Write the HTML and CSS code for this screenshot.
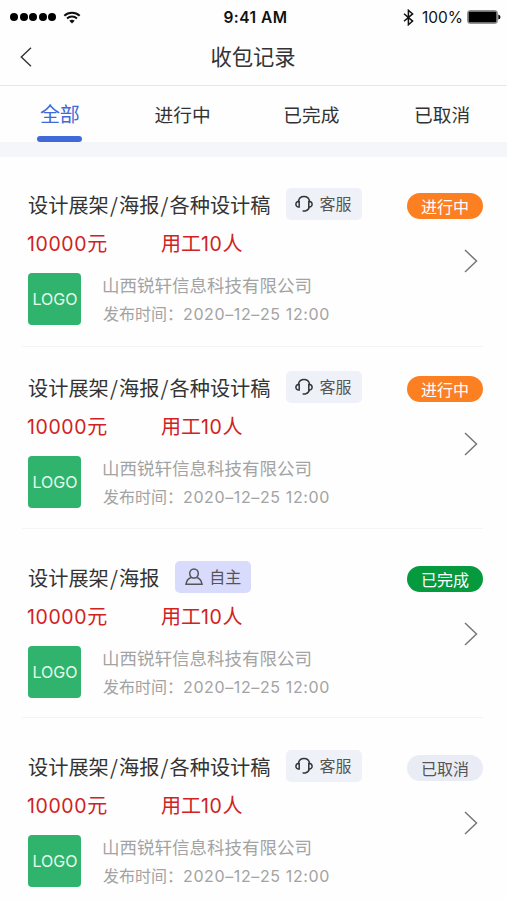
FILE: index.html
```html
<!DOCTYPE html>
<html lang="zh-CN">
<head>
<meta charset="utf-8">
<title>收包记录</title>
<link rel="stylesheet" href="styles.css">
</head>
<body>
<svg class="defs" width="0" height="0" aria-hidden="true">
  <symbol id="headset" viewBox="0 0 18 18"><path d="M3.400 6.200C4 3.400 6.200 1.600 9 1.600s5 1.800 5.600 4.600M4.200 6.400v5.600C2 12.200.9 10.900.9 9.200s1.100-3 3.300-2.800zM13.800 6.400v5.600c2.200.2 3.300-1.100 3.300-2.800s-1.100-3-3.300-2.800zM14.400 12c-.5 1.900-1.700 3.200-3.700 3.700M7.600 16h3.200"/></symbol>
  <symbol id="person" viewBox="0 0 18 18"><path d="M6.400 9.300C5.200 8.500 4.700 7.100 4.700 5.600 4.700 3 6.500 1 9 1s4.300 2 4.300 4.600c0 1.500-.5 2.900-1.700 3.700M6.400 9.300C3.400 10.400 1.600 12.400 1 16.200h16c-.6-3.800-2.400-5.800-5.400-6.900M6.400 9.300c1.600 1 3.600 1 5.200 0"/></symbol>
  <symbol id="next" viewBox="0 0 14 24"><path d="M1 1l11.500 11L1 23"/></symbol>
</svg>
<header>
  <div class="status">
    <div class="signal"><i></i><i></i><i></i><i></i><i></i>
      <svg class="wifi" width="18" height="13" viewBox="0 0 18 13"><path d="M1.300 4.700c4.300-4 11.100-4 15.400 0M4 7.500c2.800-2.600 7.200-2.600 10 0"/><path class="solid" d="M6.300 9.800c1.500-1.400 3.900-1.400 5.400 0L9 12.600z"/></svg>
    </div>
    <div class="clock">9:41 AM</div>
    <div class="power">
      <svg class="bluetooth" width="11" height="17" viewBox="0 0 11 17"><path d="M1 4.800l8.600 7.300-4.200 3.600V1.300l4.200 3.600L1 12.200"/></svg>
      <span class="percent">100%</span>
      <svg class="battery" width="34" height="14" viewBox="0 0 34 14"><rect class="shell" x=".7" y=".7" width="29.600" height="12.600" rx="2"/><rect x="1.500" y="1.500" width="28" height="11" rx="1"/><path d="M31.300 4.500q2.200.5 2.200 2.500t-2.200 2.500z"/></svg>
    </div>
  </div>
  <div class="navbar">
    <svg class="back" width="12" height="20" viewBox="0 0 12 20"><path d="M11 .8L1.300 10 11 19.200"/></svg>
    <h1>收包记录</h1>
  </div>
  <nav class="tabs">
    <a class="tab active">全部</a><a class="tab">进行中</a><a class="tab">已完成</a><a class="tab">已取消</a>
  </nav>
</header>
<main>
  <article class="record first">
    <div class="main">
      <div class="head"><h2>设计展架<b>/</b>海报<b>/</b>各种设计稿</h2><span class="tag"><svg><use href="#headset"/></svg>客服</span></div>
      <div class="terms"><span class="price"><em>10000</em>元</span><span>用工<em>10</em>人</span></div>
      <div class="company"><div class="logo">LOGO</div><div class="details"><p class="name">山西锐轩信息科技有限公司</p><p class="date">发布时间：<time>2020–12–25 12:00</time></p></div></div>
    </div>
    <div class="side"><span class="state doing">进行中</span><svg class="next"><use href="#next"/></svg></div>
  </article>
  <article class="record second">
    <div class="main">
      <div class="head"><h2>设计展架<b>/</b>海报<b>/</b>各种设计稿</h2><span class="tag"><svg><use href="#headset"/></svg>客服</span></div>
      <div class="terms"><span class="price"><em>10000</em>元</span><span>用工<em>10</em>人</span></div>
      <div class="company"><div class="logo">LOGO</div><div class="details"><p class="name">山西锐轩信息科技有限公司</p><p class="date">发布时间：<time>2020–12–25 12:00</time></p></div></div>
    </div>
    <div class="side"><span class="state doing">进行中</span><svg class="next"><use href="#next"/></svg></div>
  </article>
  <article class="record third">
    <div class="main">
      <div class="head"><h2>设计展架<b>/</b>海报</h2><span class="tag self"><svg><use href="#person"/></svg>自主</span></div>
      <div class="terms"><span class="price"><em>10000</em>元</span><span>用工<em>10</em>人</span></div>
      <div class="company"><div class="logo">LOGO</div><div class="details"><p class="name">山西锐轩信息科技有限公司</p><p class="date">发布时间：<time>2020–12–25 12:00</time></p></div></div>
    </div>
    <div class="side"><span class="state done">已完成</span><svg class="next"><use href="#next"/></svg></div>
  </article>
  <article class="record fourth">
    <div class="main">
      <div class="head"><h2>设计展架<b>/</b>海报<b>/</b>各种设计稿</h2><span class="tag"><svg><use href="#headset"/></svg>客服</span></div>
      <div class="terms"><span class="price"><em>10000</em>元</span><span>用工<em>10</em>人</span></div>
      <div class="company"><div class="logo">LOGO</div><div class="details"><p class="name">山西锐轩信息科技有限公司</p><p class="date">发布时间：<time>2020–12–25 12:00</time></p></div></div>
    </div>
    <div class="side"><span class="state cancelled">已取消</span><svg class="next"><use href="#next"/></svg></div>
  </article>
</main>
</body>
</html>
```
FILE: styles.css
```css
* { box-sizing: border-box; margin: 0; padding: 0; }
body { width: 507px; height: 900px; overflow: hidden; background: #fefefe; color: #333; font-family: "Noto Sans CJK SC", sans-serif; white-space: nowrap; }
svg { fill: none; stroke: currentColor; flex: none; display: block; }
.defs { position: absolute; }
em, b { font-style: normal; font-weight: 400; }

.status { height: 34px; display: grid; grid-template-columns: 1fr auto 1fr; align-items: center; padding: 0 6px 0 10px; font-family: Inter, sans-serif; color: #111; }
.signal { display: flex; align-items: center; gap: 1.500px; }
.signal i { width: 8px; height: 8px; border-radius: 50%; background: #000; }
.wifi { margin-left: 5px; stroke-width: 2; }
.wifi .solid { fill: currentColor; stroke: none; }
.clock { font-size: 15.500px; font-weight: 600; line-height: 20px; letter-spacing: .5px; padding-top: 1px; }
.power { display: flex; align-items: center; justify-content: flex-end; }
.bluetooth { stroke-width: 1.500; margin-right: 8px; }
.percent { font-size: 15.500px; line-height: 20px; margin-right: 4px; padding-top: 1px; }
.battery { fill: #000; stroke: none; }
.battery .shell { fill: none; stroke: #777; }

.navbar { height: 52px; display: grid; grid-template-columns: 1fr auto 1fr; align-items: center; padding: 0 21px 6px 20px; border-bottom: 1px solid #e8e8e8; }
.back { stroke-width: 1.400; }
h1 { font-size: 21.300px; font-weight: 400; line-height: 32px; padding-bottom: 1px; }

.tabs { height: 71px; display: flex; border-bottom: 15px solid #f4f6f9; }
.tab { position: relative; width: 130px; height: 56px; text-align: center; font-size: 18.700px; line-height: 55px; }
.tab:nth-child(1) { width: 120px; }
.tab:nth-child(3) { width: 132px; }
.tab:nth-child(2) { width: 126px; }
.tab.active { color: #4169d8; font-size: 20px; }
.tab.active::after { content: ""; position: absolute; left: 37px; bottom: 0; width: 45px; height: 6px; border-radius: 3px; background: #4169d8; }

.record { display: flex; justify-content: space-between; margin: 0 24px 0 22px; padding: 31px 0 20px 6px; border-bottom: 1px solid #f4f4f4; }
.second { padding-top: 24px; padding-bottom: 19px; }
.third { padding-top: 32px; padding-bottom: 18px; }
.fourth { padding-top: 32px; border: 0; }
.head { display: flex; align-items: center; height: 32px; }
h2 { font-size: 20.200px; line-height: 32px; font-weight: 400; padding-top: 1px; }
h2 b { display: inline-block; width: 10.200px; text-align: center; }
.tag { width: 76px; height: 32px; display: flex; align-items: center; gap: 6px; margin-left: 16px; padding: 0 0 2px 9px; border-radius: 5px; background: #eff1f9; font-size: 16px; color: #555; }
.tag svg { width: 18px; height: 18px; stroke-width: 1.500; color: #333; margin-top: 2px; }
.tag.self { background: #d8dbfc; padding-left: 10px; }
.tag.self svg { color: #555; }
.terms { display: flex; height: 28px; margin: 9px 0 0 -1px; font-size: 20px; line-height: 28px; color: #d02222; }
.terms em { font-family: Inter, sans-serif; font-size: 19.500px; letter-spacing: .6px; }
.price { width: 134px; }
.company { display: flex; margin-top: 16px; }
.logo { width: 53px; height: 52px; padding-left: 1px; border-radius: 4px; background: #30b36d; color: #e4fbec; font: 16px/52px Inter, sans-serif; text-align: center; }
.details { margin-left: 21px; color: #a3a3a3; }
.name { font-size: 17.500px; line-height: 24px; }
.date { margin: 4px 0 0 1px; font-size: 16px; line-height: 24px; }
.date time { font-family: Inter, sans-serif; letter-spacing: .62px; }
.side { width: 76px; display: flex; flex-direction: column; }
.state { height: 26px; margin-top: 5px; border-radius: 13px; font-size: 16px; line-height: 26px; text-align: center; color: #fff; }
.doing { background: #fc8022; }
.done { background: #069a3e; }
.cancelled { background: #e9ecf5; color: #555; }
.next { width: 14px; height: 24px; margin: 30px 0 0 57px; stroke-width: 1.500; color: #777; }
```
